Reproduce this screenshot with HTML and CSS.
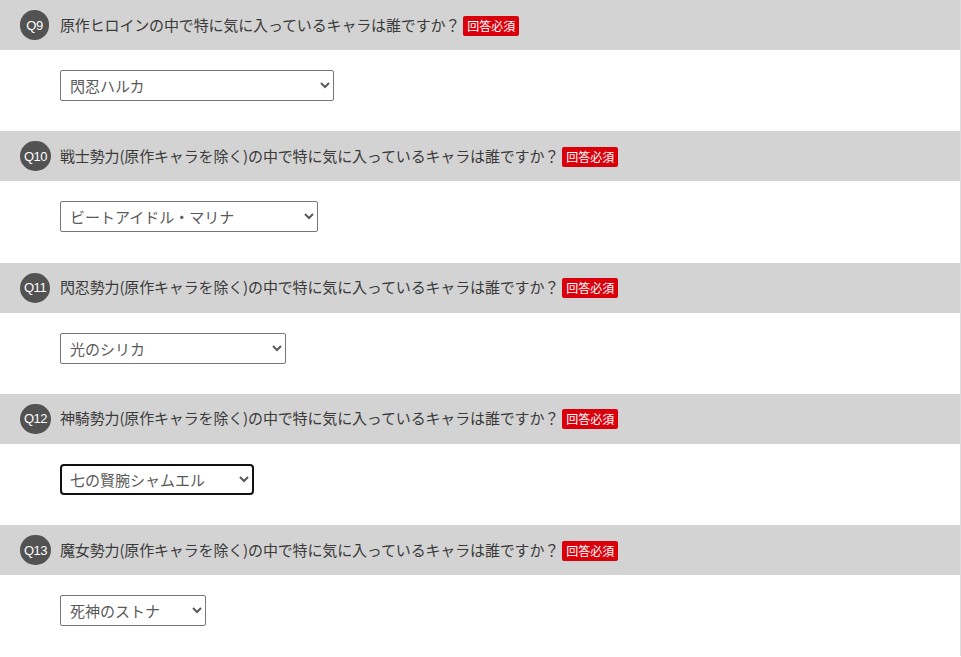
FILE: index.html
```html
<!DOCTYPE html>
<html lang="ja">
<head>
    <meta charset="UTF-8">
    <meta name="viewport" content="width=device-width, initial-scale=1.0">
    <title>アンケート</title>
    <link rel="stylesheet" href="styles.css">
</head>
<body>

    <div class="survey">

        <!-- Q9 -->
        <section class="question">
            <div class="question-head">
                <div class="num-col"><span class="num">Q9</span></div>
                <p class="question-text">原作ヒロインの中で特に気に入っているキャラは誰ですか？<span class="required">回答必須</span></p>
            </div>
            <div class="question-body">
                <select class="answer answer-q9">
                    <option>閃忍ハルカ</option>
                </select>
            </div>
        </section>

        <!-- Q10 -->
        <section class="question">
            <div class="question-head">
                <div class="num-col"><span class="num">Q10</span></div>
                <p class="question-text">戦士勢力(原作キャラを除く)の中で特に気に入っているキャラは誰ですか？<span class="required">回答必須</span></p>
            </div>
            <div class="question-body">
                <select class="answer answer-q10">
                    <option>ビートアイドル・マリナ</option>
                </select>
            </div>
        </section>

        <!-- Q11 -->
        <section class="question">
            <div class="question-head">
                <div class="num-col"><span class="num">Q11</span></div>
                <p class="question-text">閃忍勢力(原作キャラを除く)の中で特に気に入っているキャラは誰ですか？<span class="required">回答必須</span></p>
            </div>
            <div class="question-body">
                <select class="answer answer-q11">
                    <option>光のシリカ</option>
                </select>
            </div>
        </section>

        <!-- Q12 -->
        <section class="question">
            <div class="question-head">
                <div class="num-col"><span class="num">Q12</span></div>
                <p class="question-text">神騎勢力(原作キャラを除く)の中で特に気に入っているキャラは誰ですか？<span class="required">回答必須</span></p>
            </div>
            <div class="question-body">
                <select class="answer answer-q12 is-focused">
                    <option>七の賢腕シャムエル</option>
                </select>
            </div>
        </section>

        <!-- Q13 -->
        <section class="question">
            <div class="question-head">
                <div class="num-col"><span class="num">Q13</span></div>
                <p class="question-text">魔女勢力(原作キャラを除く)の中で特に気に入っているキャラは誰ですか？<span class="required">回答必須</span></p>
            </div>
            <div class="question-body">
                <select class="answer answer-q13">
                    <option>死神のストナ</option>
                </select>
            </div>
        </section>

    </div>

</body>
</html>
```

FILE: styles.css
```css
/* General */
* {
    margin: 0;
    padding: 0;
    box-sizing: border-box;
}

body {
    font-family: "Liberation Sans", "Noto Sans CJK JP", sans-serif;
    background-color: #fff;
    color: #333;
}

.survey {
    width: 961px;
    border-right: 1px solid #dcdcdc;
}

.question + .question {
    margin-top: 0.3px;
}

/* Question header */
.question-head {
    display: flex;
    align-items: center;
    height: 50px;
    padding-left: 20px;
    background-color: #d3d3d3;
}

.num-col {
    flex: 0 0 40px;
    display: flex;
}

.num {
    display: inline-flex;
    justify-content: center;
    align-items: center;
    min-width: 29px;
    height: 30px;
    padding: 0 4px;
    border-radius: 15px;
    background-color: #525252;
    color: #fff;
    font-size: 13px;
    letter-spacing: -0.5px;
}

.question-text {
    font-family: "Noto Sans CJK JP", sans-serif;
    font-size: 15px;
    color: #3a3a3a;
    line-height: 20px;
    letter-spacing: -0.15px;
    white-space: nowrap;
}

.required {
    display: inline-block;
    margin-left: 3px;
    padding: 0 4px;
    height: 20px;
    line-height: 20px;
    border-radius: 2px;
    background-color: #d9000b;
    color: #fff;
    font-size: 12px;
    letter-spacing: 0;
    vertical-align: 0;
}

/* Answer area */
.question-body {
    padding: 20px 60px 30px;
}

.answer {
    display: block;
    height: 31px;
    padding: 0 6px 0 5px;
    border: 1px solid #767676;
    border-radius: 2px;
    background-color: #fff;
    color: #5a5a5a;
    font-family: "Noto Sans CJK JP", sans-serif;
    font-size: 15px;
}

.answer-q9 { width: 274px; }
.answer-q10 { width: 258px; }
.answer-q11 { width: 226px; }
.answer-q12 { width: 194px; }
.answer-q13 { width: 146px; }

.answer.is-focused {
    border: 2px solid #111;
    border-radius: 4px;
    padding-left: 4px;
}
```
